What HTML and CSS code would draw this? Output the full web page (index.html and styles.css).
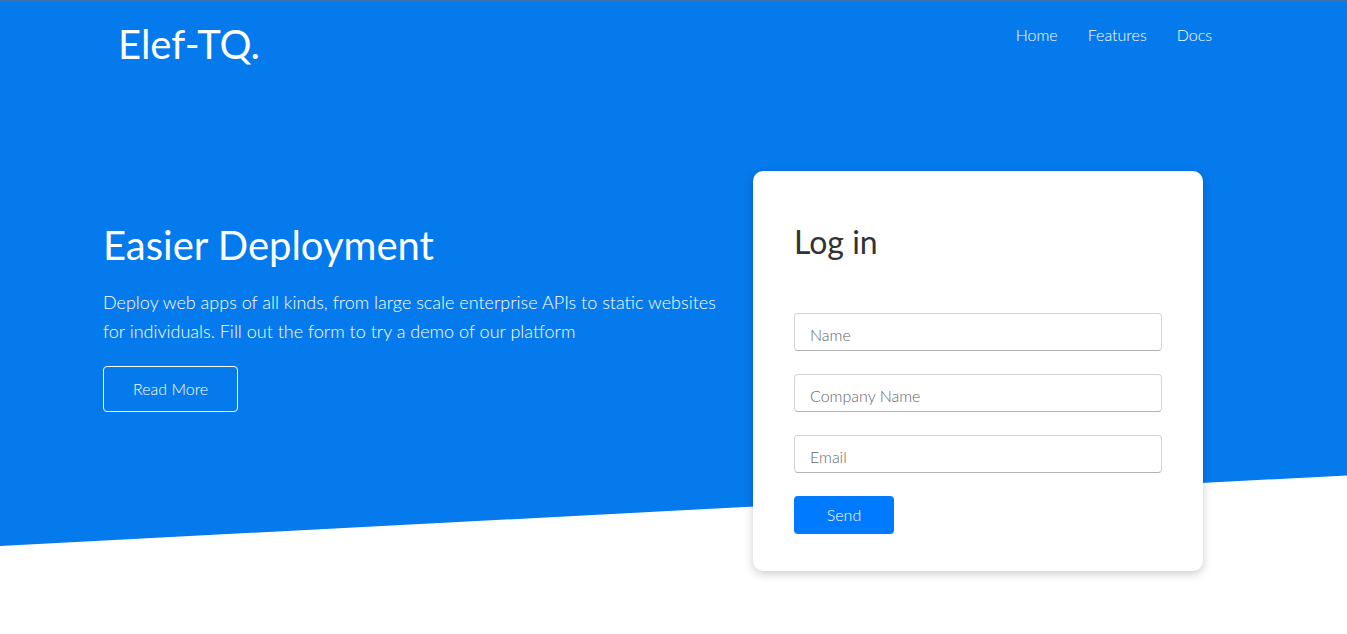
FILE: index.html
```html
<!DOCTYPE html>
<html lang="en">
<head>
<meta charset="utf-8">
<meta name="viewport" content="width=device-width, initial-scale=1">
<title>Elef-TQ.</title>
<link rel="stylesheet" href="styles.css">
</head>
<body>
<div class="page">
  <header class="navbar container">
    <h1 class="logo">Elef-TQ.</h1>
    <nav>
      <ul class="nav-list">
        <li><a href="#home">Home</a></li>
        <li><a href="#features">Features</a></li>
        <li><a href="#docs">Docs</a></li>
      </ul>
    </nav>
  </header>
  <main class="showcase container">
    <section class="intro">
      <h2 class="intro-title">Easier Deployment</h2>
      <p class="intro-text">Deploy web apps of all kinds, from large scale enterprise APIs to static websites for individuals. Fill out the form to try a demo of our platform</p>
      <a class="btn btn-outline" href="#features">Read More</a>
    </section>
    <section class="card">
      <h2 class="card-title">Log in</h2>
      <form class="form">
        <input class="field" type="text" name="name" placeholder="Name" aria-label="Name">
        <input class="field" type="text" name="company" placeholder="Company Name" aria-label="Company Name">
        <input class="field" type="email" name="email" placeholder="Email" aria-label="Email">
        <button class="btn btn-primary" type="submit">Send</button>
      </form>
    </section>
  </main>
</div>
</body>
</html>
```
FILE: styles.css
```css
* {
  box-sizing: border-box;
}

body {
  margin: 0;
  background: #fff;
  color: #333;
  font-family: Lato, sans-serif;
  font-size: 16px;
  font-weight: 300;
  line-height: 24px;
}

h1, h2, p, ul {
  margin: 0;
  padding: 0;
}

.page {
  position: relative;
  border-top: 2px solid #3c72ae;
  padding-bottom: 63px;
}

/* Blue backdrop with a slanted lower edge */
.page::before {
  content: "";
  position: absolute;
  z-index: -1;
  inset: 0 0 88px;
  background: #057aed;
  clip-path: polygon(0 0, 100% 0, 100% calc(100% - 5.24vw), 0 100%);
}

.container {
  max-width: 1141px;
  margin: 0 auto;
}

.navbar {
  display: flex;
  justify-content: space-between;
  padding: 18px 32px 0 15px;
  color: #fff;
}

.logo {
  font-size: 40px;
  font-weight: 400;
  line-height: 48px;
}

.nav-list {
  display: flex;
  gap: 30px;
  padding-top: 3px;
  list-style: none;
}

.nav-list a {
  color: #fff;
  text-decoration: none;
}

.showcase {
  display: grid;
  grid-template-columns: minmax(0, 1fr) 450px;
  gap: 24px;
  align-items: start;
  padding: 103px 41px 0 0;
}

.intro {
  padding-top: 48px;
  color: #fff;
}

.intro-title {
  font-size: 40px;
  font-weight: 400;
  line-height: 52px;
}

.intro-text {
  margin: 17px 0 20px;
  font-size: 18px;
  line-height: 29px;
}

.btn {
  display: inline-block;
  border: 0;
  border-radius: 4px;
  color: #fff;
  font: inherit;
  text-align: center;
  text-decoration: none;
  cursor: pointer;
}

.btn-outline {
  border: 1px solid #fff;
  padding: 10px 29px;
}

.btn-primary {
  align-self: flex-start;
  width: 100px;
  padding: 7px 0;
  background: #007bff;
}

.card {
  min-height: 400px;
  padding: 50px 41px 37px;
  border-radius: 10px;
  background: #fff;
  box-shadow: 0 3px 10px rgba(0, 0, 0, 0.2);
}

.card-title {
  font-size: 32px;
  font-weight: 400;
  line-height: 42px;
}

.form {
  display: flex;
  flex-direction: column;
  gap: 23px;
  margin-top: 50px;
}

.field {
  width: 100%;
  height: 38px;
  padding: 4px 15px 0;
  border: 1px solid #ced4da;
  border-bottom-color: #b4b4b4;
  border-radius: 4px;
  color: #333;
  font: inherit;
}

.field::placeholder {
  color: #666;
  opacity: 1;
}

@media (max-width: 900px) {
  .showcase {
    grid-template-columns: minmax(0, 1fr);
    padding: 40px 20px 0;
  }
}
```
